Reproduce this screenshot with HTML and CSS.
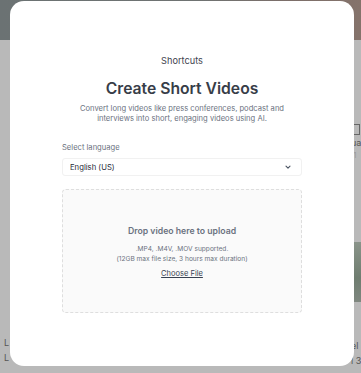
FILE: index.html
```html
<!DOCTYPE html>
<html lang="en">

<head>
  <meta charset="UTF-8">
  <meta name="viewport" content="width=device-width, initial-scale=1.0">
  <title>Create Short Videos</title>
  <link rel="stylesheet" href="styles.css">
</head>

<body>
  <div class="backdrop">
    <div class="hero"></div>
    <div class="page">
      <div class="side side-left">
        <p class="side-text">L</p>
        <p class="side-text">L</p>
      </div>
      <div class="side side-right">
        <span class="side-check"></span>
        <p class="side-text">ua</p>
        <p class="side-sub">:1</p>
        <div class="side-thumb"></div>
        <p class="side-text">el</p>
        <p class="side-text">l 3</p>
      </div>
    </div>
  </div>

  <div class="modal">
    <p class="eyebrow">Shortcuts</p>
    <h1>Create Short Videos</h1>
    <p class="lead">Convert long videos like press conferences, podcast and interviews into short, engaging videos using AI.</p>

    <form class="upload-form">
      <label class="field-label" for="language">Select language</label>
      <div class="select">
        <span>English (US)</span>
        <svg width="8" height="8" viewBox="0 0 10 10" fill="none" stroke="#4b5563" stroke-width="1.4" stroke-linecap="round" stroke-linejoin="round">
          <path d="M2.5 3.8 5 6.3 7.5 3.8" />
        </svg>
      </div>

      <div class="dropzone">
        <p class="drop-title">Drop video here to upload</p>
        <p class="drop-note">.MP4, .M4V, .MOV supported.<br>(12GB max file size, 3 hours max duration)</p>
        <a class="choose" href="#">Choose File</a>
      </div>
    </form>
  </div>
</body>

</html>
```

FILE: styles.css
```css
body {
  margin: 0;
  font-family: Inter, "Noto Sans", sans-serif;
  background-color: #b9b9b9;
  height: 373px;
  overflow: hidden;
}

.backdrop {
  display: flex;
  flex-direction: column;
  height: 100%;
}

.hero {
  height: 40px;
  background: linear-gradient(90deg, #6b7273 0%, #6f7372 55%, #7c6e69 80%, #85736b 100%);
}

.page {
  flex: 1;
  display: flex;
  justify-content: space-between;
  color: #555;
  font-size: 9px;
}

.side {
  display: flex;
  flex-direction: column;
  width: 8px;
}

.side-left {
  justify-content: flex-end;
  padding: 0 0 8px 4px;
}

.side-right {
  width: 10px;
  padding-top: 84px;
  overflow: hidden;
}

.side-text {
  margin: 2px 0;
  line-height: 11px;
  white-space: nowrap;
}

.side-sub {
  margin: 0;
  color: #9a9a9a;
  font-size: 8px;
}

.side-check {
  width: 9px;
  height: 9px;
  border: 1px solid #666;
  margin-left: -2px;
}

.side-thumb {
  height: 60px;
  margin: 82px 0 36px;
  background: linear-gradient(180deg, #8a948a, #6f7d70 60%, #7f877f);
}

.modal {
  position: absolute;
  top: 1px;
  left: 10px;
  width: 344px;
  height: 365px;
  box-sizing: border-box;
  background: #fff;
  border-radius: 14px;
  padding: 54px 52px 0;
  display: flex;
  flex-direction: column;
  align-items: center;
  text-align: center;
}

.eyebrow {
  margin: 0;
  font-size: 9.2px;
  line-height: 12px;
  color: #3f4550;
}

h1 {
  margin: 12px 0 0;
  font-size: 15.7px;
  line-height: 20px;
  font-weight: 600;
  color: #373d48;
}

.lead {
  margin: 5px 0 0;
  font-size: 7.6px;
  line-height: 10px;
  color: #6b7280;
}

.upload-form {
  width: 240px;
  margin-top: 19px;
  display: flex;
  flex-direction: column;
  text-align: left;
}

.field-label {
  font-size: 7.6px;
  line-height: 10px;
  color: #6b7280;
}

.select {
  margin-top: 5px;
  height: 18px;
  box-sizing: border-box;
  border: 1px solid #f1f1f1;
  border-radius: 3px;
  padding: 0 9px 0 7px;
  display: flex;
  align-items: center;
  justify-content: space-between;
  font-size: 7.7px;
  color: #1f2937;
}

.dropzone {
  margin-top: 13px;
  height: 124px;
  box-sizing: border-box;
  border: 1px dashed #dedede;
  border-radius: 4px;
  background: #fafafa;
  display: flex;
  flex-direction: column;
  align-items: center;
  padding-top: 35px;
  text-align: center;
}

.drop-title {
  margin: 0;
  font-size: 8.7px;
  line-height: 12px;
  font-weight: 600;
  color: #6b7280;
}

.drop-note {
  margin: 7px 0 0;
  font-size: 6.6px;
  line-height: 10px;
  color: #6b7280;
}

.choose {
  margin-top: 4px;
  font-size: 7.5px;
  line-height: 11px;
  color: #374151;
  text-decoration: underline;
}
```
